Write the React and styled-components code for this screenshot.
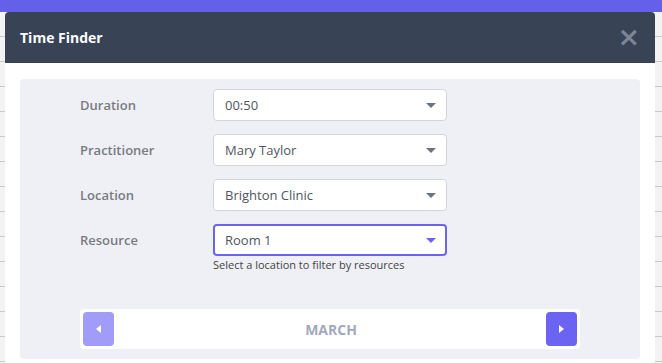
import React from 'react'
import styled, { createGlobalStyle } from 'styled-components'

const Global = createGlobalStyle`
  html, body { margin: 0; padding: 0; }
  body {
    font-family: "Open Sans", "Liberation Sans", sans-serif;
    width: 662px;
    height: 363px;
    overflow: hidden;
  }
`

const Page = styled.div`
  position: relative;
  width: 662px;
  height: 363px;
  overflow: hidden;
  background: #ececec;
`

const TopBar = styled.div`
  height: 12px;
  background: #6460e9;
`

const Backdrop = styled.div`
  height: 351px;
  background:
    repeating-linear-gradient(
      to bottom,
      #f3f3f3 0px,
      #f3f3f3 24px,
      #c9c9c9 24px,
      #c9c9c9 25px
    );
`

const Modal = styled.div`
  position: absolute;
  left: 5px;
  top: 12px;
  width: 650px;
  height: 360px;
  background: #fff;
  border-radius: 4px 4px 0 0;
  overflow: hidden;
`

const Header = styled.div`
  height: 51px;
  background: #384356;
  display: flex;
  align-items: center;
  justify-content: space-between;
  padding: 0 15px 0 15px;
  box-sizing: border-box;
`

const Title = styled.h2`
  margin: 0;
  color: #fff;
  font-size: 14px;
  font-weight: 700;
`

const Close = styled.span`
  color: #7c8595;
  font-size: 27px;
  font-weight: 700;
  line-height: 1;
  font-family: "DejaVu Sans", sans-serif;
  margin-top: -2px;
`

const Body = styled.div`
  padding: 16px 15px 0;
`

const Panel = styled.div`
  background: #eff0f5;
  border-radius: 4px;
`

const Form = styled.div`
  padding: 10px 0 0 60px;
  height: 218px;
  box-sizing: border-box;
  display: flex;
  flex-direction: column;
  gap: 13px;
`

const Row = styled.div`
  display: grid;
  grid-template-columns: 133px 234px;
  align-items: start;
`

const Label = styled.label`
  font-size: 13px;
  font-weight: 600;
  color: #797b83;
  line-height: 32px;
`

const Select = styled.div`
  height: 32px;
  box-sizing: border-box;
  background: #fff;
  border: ${p => (p.$active ? '2px solid #6c63f0' : '1px solid #d4d5da')};
  border-radius: 4px;
  display: flex;
  align-items: center;
  justify-content: space-between;
  padding: ${p => (p.$active ? '0 9px 0 10px' : '0 10px 0 11px')};
  font-size: 13px;
  color: #4f5562;
`

const Caret = styled.span`
  width: 0;
  height: 0;
  border-left: 5px solid transparent;
  border-right: 5px solid transparent;
  border-top: 5px solid ${p => (p.$active ? '#6c63f0' : '#6b7280')};
`

const Help = styled.div`
  font-size: 11px;
  color: #444;
  margin-top: 1px;
`

const Footer = styled.div`
  padding: 12px 0 10px;
  display: flex;
  justify-content: center;
`

const Pager = styled.div`
  width: 500px;
  height: 40px;
  box-sizing: border-box;
  background: #fff;
  border-radius: 4px;
  padding: 3px;
  display: flex;
  align-items: center;
  justify-content: space-between;
`

const NavButton = styled.button`
  width: 31px;
  height: 34px;
  border: none;
  border-radius: 4px;
  background: ${p => (p.$disabled ? '#a09cf7' : '#6b63f2')};
  display: flex;
  align-items: center;
  justify-content: center;
  padding: 0;
`

const Tri = styled.span`
  width: 0;
  height: 0;
  border-top: 4px solid transparent;
  border-bottom: 4px solid transparent;
  ${p => (p.$dir === 'left'
    ? 'border-right: 5px solid #fff;'
    : 'border-left: 5px solid #fff;')}
`

const Month = styled.span`
  font-size: 14px;
  font-weight: 700;
  color: #a3a9bd;
  margin-left: 2px;
`

const fields = [
  { label: 'Duration', value: '00:50' },
  { label: 'Practitioner', value: 'Mary Taylor' },
  { label: 'Location', value: 'Brighton Clinic' },
  { label: 'Resource', value: 'Room 1', active: true, help: 'Select a location to filter by resources' },
]

const App = () => {
  return (
    <Page>
      <Global />
      <TopBar />
      <Backdrop />
      <Modal>
        <Header>
          <Title>Time Finder</Title>
          <Close>×</Close>
        </Header>
        <Body>
          <Panel>
            <Form>
              {fields.map((f) => (
                <Row key={f.label}>
                  <Label>{f.label}</Label>
                  <div>
                    <Select $active={f.active}>
                      <span>{f.value}</span>
                      <Caret $active={f.active} />
                    </Select>
                    {f.help && <Help>{f.help}</Help>}
                  </div>
                </Row>
              ))}
            </Form>
            <Footer>
              <Pager>
                <NavButton $disabled><Tri $dir="left" /></NavButton>
                <Month>MARCH</Month>
                <NavButton><Tri $dir="right" /></NavButton>
              </Pager>
            </Footer>
          </Panel>
        </Body>
      </Modal>
    </Page>
  )
}

export default App
